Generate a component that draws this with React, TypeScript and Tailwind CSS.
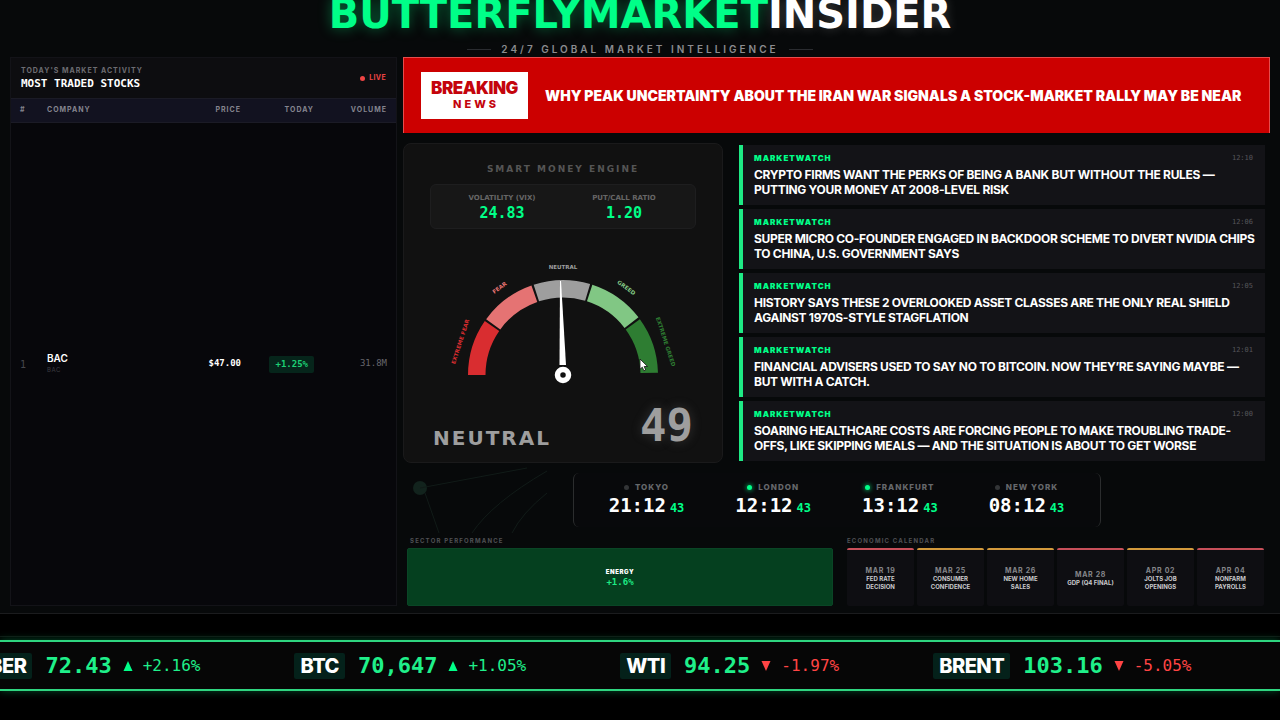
const SANS = "font-['Inter','Liberation_Sans',sans-serif]";
const MONO = "font-['DejaVu_Sans_Mono','Liberation_Mono',monospace]";
const WIDE = "font-['DejaVu_Sans','Liberation_Sans',sans-serif]";

const news = [
  { time: "12:10", title: "CRYPTO FIRMS WANT THE PERKS OF BEING A BANK BUT WITHOUT THE RULES — PUTTING YOUR MONEY AT 2008-LEVEL RISK" },
  { time: "12:06", title: "SUPER MICRO CO-FOUNDER ENGAGED IN BACKDOOR SCHEME TO DIVERT NVIDIA CHIPS TO CHINA, U.S. GOVERNMENT SAYS" },
  { time: "12:05", title: "HISTORY SAYS THESE 2 OVERLOOKED ASSET CLASSES ARE THE ONLY REAL SHIELD AGAINST 1970S-STYLE STAGFLATION" },
  { time: "12:01", title: "FINANCIAL ADVISERS USED TO SAY NO TO BITCOIN. NOW THEY’RE SAYING MAYBE — BUT WITH A CATCH." },
  { time: "12:00", title: "SOARING HEALTHCARE COSTS ARE FORCING PEOPLE TO MAKE TROUBLING TRADE-OFFS, LIKE SKIPPING MEALS — AND THE SITUATION IS ABOUT TO GET WORSE" },
];

const clocks = [
  { city: "TOKYO", time: "21:12", open: false },
  { city: "LONDON", time: "12:12", open: true },
  { city: "FRANKFURT", time: "13:12", open: true },
  { city: "NEW YORK", time: "08:12", open: false },
];

const events = [
  { date: "MAR 19", name: "FED RATE DECISION", high: true },
  { date: "MAR 25", name: "CONSUMER CONFIDENCE", high: false },
  { date: "MAR 26", name: "NEW HOME SALES", high: false },
  { date: "MAR 28", name: "GDP (Q4 FINAL)", high: true },
  { date: "APR 02", name: "JOLTS JOB OPENINGS", high: false },
  { date: "APR 04", name: "NONFARM PAYROLLS", high: true },
];

const quotes = [
  { symbol: "LUMBER", price: "72.43", change: "+2.16%", up: true },
  { symbol: "BTC", price: "70,647", change: "+1.05%", up: true },
  { symbol: "WTI", price: "94.25", change: "-1.97%", up: false },
  { symbol: "BRENT", price: "103.16", change: "-5.05%", up: false },
];

const segments = [
  { start: 180, color: "#d92d30" },
  { start: 144, color: "#e57373" },
  { start: 108, color: "#9e9e9e" },
  { start: 72, color: "#81c784" },
  { start: 36, color: "#2e7d32" },
];

const gaugeLabels = [
  { text: "EXTREME FEAR", angle: -72, color: "#d92d30" },
  { text: "FEAR", angle: -36, color: "#e57373" },
  { text: "NEUTRAL", angle: 0, color: "#9e9e9e" },
  { text: "GREED", angle: 36, color: "#81c784" },
  { text: "EXTREME GREED", angle: 72, color: "#2e7d32" },
];

function arc(start: number, end: number, outer: number, inner: number) {
  const point = (deg: number, r: number) => {
    const a = (deg * Math.PI) / 180;
    return `${(r * Math.cos(a)).toFixed(2)} ${(-r * Math.sin(a)).toFixed(2)}`;
  };
  return `M${point(start, outer)}A${outer} ${outer} 0 0 1 ${point(end, outer)}L${point(end, inner)}A${inner} ${inner} 0 0 0 ${point(start, inner)}Z`;
}

function Header() {
  return (
    <header className="flex flex-col items-center">
      <h1 className={`${WIDE} text-[40px] leading-7 font-bold whitespace-nowrap text-white [text-shadow:0_0_12px_rgba(255,255,255,0.2)]`}>
        <span className="text-[#00ff88] [text-shadow:0_0_14px_rgba(0,255,136,0.4)]">BUTTERFLYMARKET</span>INSIDER
      </h1>
      <div className="mt-3.5 flex items-center gap-2.5">
        <span className="h-px w-6 bg-[#2a2c30]" />
        <p className="text-[10px] leading-[15px] font-semibold tracking-[3px] text-[#8b8c8f]">24/7 GLOBAL MARKET INTELLIGENCE</p>
        <span className="h-px w-6 bg-[#2a2c30]" />
      </div>
    </header>
  );
}

function StocksPanel() {
  return (
    <section className="flex flex-col border border-[#131318] bg-[#07070b]">
      <div className="flex h-10 items-center justify-between bg-[#0d0d10] px-2.5">
        <div>
          <p className="text-[7px] leading-3 font-bold tracking-[1px] text-[#6d6d73]">TODAY'S MARKET ACTIVITY</p>
          <h2 className={`${MONO} text-[11px] leading-3.5 font-bold text-white`}>MOST TRADED STOCKS</h2>
        </div>
        <p className="flex items-center gap-1 text-[7px] font-bold tracking-[0.05em] text-[#ef4444]">
          <span className="size-[5px] rounded-full bg-[#ef4444]" />
          LIVE
        </p>
      </div>
      <table className="w-full grow table-fixed">
        <thead>
          <tr className="h-6 border-y border-[#1b1b26] bg-[#121220] text-[7px] font-bold tracking-[1px] text-[#85858f]">
            <th className="w-9 pl-[9px] text-left">#</th>
            <th className="text-left">COMPANY</th>
            <th className="w-20 text-right">PRICE</th>
            <th className="w-[73px] text-right">TODAY</th>
            <th className="w-[82px] pr-[9px] text-right">VOLUME</th>
          </tr>
        </thead>
        <tbody>
          <tr className={`${MONO} text-[9px]`}>
            <td className="pl-[9px] text-[10px] text-[#46464b]">1</td>
            <td className={SANS}>
              <p className="text-[10px] leading-3 font-semibold text-white">BAC</p>
              <p className="text-[6px] leading-3 tracking-[0.1em] text-[#3c3c42]">BAC</p>
            </td>
            <td className="text-right font-bold text-white">$47.00</td>
            <td className="text-right">
              <span className="inline-block rounded-xs bg-[#06251b] px-1.5 py-0.5 leading-[13px] font-bold text-[#1ccf74]">+1.25%</span>
            </td>
            <td className="pr-[9px] text-right text-[#66666c]">31.8M</td>
          </tr>
        </tbody>
      </table>
    </section>
  );
}

function Breaking() {
  return (
    <section className="flex h-[76px] items-center gap-[17px] border border-b-0 border-[#e64d4d] bg-[#cc0000] px-[17px]">
      <div className="flex h-[47px] w-[107px] shrink-0 flex-col items-center justify-center bg-white text-[#c4040c]">
        <span className="text-[17px] leading-4 font-black tracking-tight">BREAKING</span>
        <span className="mr-[-3px] text-[11px] leading-4 font-extrabold tracking-[3px]">NEWS</span>
      </div>
      <h2 className="text-sm font-black whitespace-nowrap text-white">
        WHY PEAK UNCERTAINTY ABOUT THE IRAN WAR SIGNALS A STOCK-MARKET RALLY MAY BE NEAR
      </h2>
    </section>
  );
}

function Gauge() {
  return (
    <svg viewBox="-240 -240 480 280" className="mx-auto w-60" role="img" aria-label="Sentiment gauge at 49">
      {segments.map((s) => (
        <path key={s.start} d={arc(s.start, s.start - 34.6, 190, 155)} fill={s.color} />
      ))}
      {gaugeLabels.map((l) => (
        <text
          key={l.text}
          transform={`rotate(${l.angle}) translate(0 -212)`}
          textAnchor="middle"
          fontSize="11"
          fontWeight="700"
          fill={l.color}
        >
          {l.text}
        </text>
      ))}
      <path d="M-7 -20L-6 -188L-4 -188L6 -20Z" fill="#fff" />
      <circle r="11" fill="#111" stroke="#fff" strokeWidth="11" />
    </svg>
  );
}

function SmartMoney() {
  return (
    <section className={`${WIDE} flex flex-col rounded-lg border border-[#1a1a1b] bg-[#111111] px-[26px] pt-[19px] pb-1.5`}>
      <h2 className="text-center text-[9px] leading-3 font-bold tracking-[2px] text-[#555]">SMART MONEY ENGINE</h2>
      <dl className="mt-[9px] grid h-[45px] grid-cols-2 content-center rounded-md border border-[#1e1e1f] bg-[#171717] px-2.5 text-center">
        {[
          ["VOLATILITY (VIX)", "24.83"],
          ["PUT/CALL RATIO", "1.20"],
        ].map(([label, value]) => (
          <div key={label}>
            <dt className="text-[7px] leading-3 font-bold text-[#666]">{label}</dt>
            <dd className={`${MONO} text-[15px] leading-[18px] font-bold text-[#00ff88]`}>{value}</dd>
          </div>
        ))}
      </dl>
      <div className="mt-[26px]">
        <Gauge />
      </div>
      <div className="mt-auto flex items-end justify-between px-[3px] text-[#9e9e9e]">
        <p className="pb-1.5 text-xl leading-6 font-bold tracking-[2px]">NEUTRAL</p>
        <p className={`${MONO} text-[44px] leading-[60px] font-bold [text-shadow:0_0_12px_rgba(158,158,158,0.25)]`}>49</p>
      </div>
    </section>
  );
}

function NewsList() {
  return (
    <ul className="flex flex-col gap-1 pt-0.5">
      {news.map((item) => (
        <li key={item.time} className="h-15 border-l-4 border-[#1eea85] bg-[#131317] py-[7px] pr-2 pl-[11px]">
          <div className="flex items-center justify-between pr-1 leading-3">
            <span className="text-[8px] font-black tracking-[1px] text-[#00ff88]">MARKETWATCH</span>
            <time className={`${MONO} text-[7px] text-[#55555a]`}>{item.time}</time>
          </div>
          <h3 className="mt-[3px] text-xs leading-[15px] font-bold tracking-tight text-white">{item.title}</h3>
        </li>
      ))}
    </ul>
  );
}

function Clocks() {
  return (
    <section className="mx-auto flex h-[54px] w-[528px] justify-center gap-[51px] rounded-md border-x border-[#2b2d2e] bg-[#08090b]">
      {clocks.map((c) => (
        <div key={c.city} className="flex flex-col items-center pt-2">
          <p className="flex items-center gap-1.5 text-[8px] leading-3 font-extrabold tracking-[1px] text-[#66686b]">
            {c.open ? (
              <span className="size-[5px] rounded-full bg-[#00ff88] shadow-[0_0_5px_#00ff88]" />
            ) : (
              <span className="size-[5px] rounded-full bg-[#333537]" />
            )}
            {c.city}
          </p>
          <p className={`${MONO} flex items-baseline gap-1 leading-6 font-bold`}>
            <span className="text-[19px] text-white">{c.time}</span>
            <span className="text-xs text-[#00ff88]">43</span>
          </p>
        </div>
      ))}
    </section>
  );
}

function SectorsAndCalendar() {
  return (
    <div className="grid grow grid-cols-[minmax(0,426fr)_minmax(0,417fr)] gap-3.5 pr-1.5 pl-1">
      <section className="flex flex-col">
        <h2 className="pl-[3px] text-[6px] leading-3 font-bold tracking-[0.2em] text-[#505155]">SECTOR PERFORMANCE</h2>
        <div className="mt-px flex grow flex-col items-center justify-center rounded-xs border border-[#0a4626] bg-[#05401f]">
          <p className="text-[6px] leading-[10px] font-black tracking-[0.1em] text-white">ENERGY</p>
          <p className={`${MONO} text-[9px] leading-[10px] font-bold text-[#1eea85]`}>+1.6%</p>
        </div>
      </section>
      <section className="flex flex-col">
        <h2 className="text-[6px] leading-3 font-bold tracking-[0.2em] text-[#505155]">ECONOMIC CALENDAR</h2>
        <ul className="mt-px grid grow grid-cols-6 gap-[3px]">
          {events.map((e) => (
            <li
              key={e.date}
              className={`flex flex-col items-center justify-center rounded-xs border-t-2 bg-[#0e0e12] px-2 text-center ${e.high ? "border-[#c8505a]" : "border-[#d39a3c]"}`}
            >
              <p className="text-[7px] leading-[9px] font-bold tracking-[0.1em] text-[#85868a]">{e.date}</p>
              <p className="text-[6px] leading-2 font-bold text-[#c9c9cc]">{e.name}</p>
            </li>
          ))}
        </ul>
      </section>
    </div>
  );
}

function Ticker() {
  return (
    <footer className="border-t border-[#1b1c1e] bg-black pt-[22px] pb-[29px]">
      <div className="border-t border-[#101412] pt-[3px]">
        <div className="flex h-[51px] items-center gap-[94px] overflow-hidden border-y-2 border-[#2fd680] bg-[#060606] shadow-[0_0_8px_rgba(0,255,136,0.3)]">
          {quotes.map((q) => (
            <div key={q.symbol} className="flex shrink-0 items-center whitespace-nowrap first:-ml-[60px]">
              <span className="rounded-xs bg-[#04211a] px-1.5 text-xl leading-[26px] font-extrabold tracking-tight text-white">{q.symbol}</span>
              <span className={`${MONO} ml-[13px] text-[22px] leading-[26px] font-bold text-[#1ff08a]`}>{q.price}</span>
              <svg viewBox="0 0 10 10" className={q.up ? "ml-[11px] size-2.5 text-[#00ff88]" : "ml-[11px] size-2.5 text-[#ff4444]"} aria-hidden="true">
                <path d={q.up ? "M5 0L9.5 10H.5Z" : "M5 10L9.5 0H.5Z"} fill="currentColor" />
              </svg>
              <span className={`${MONO} ml-2.5 text-base ${q.up ? "text-[#1ff08a]" : "text-[#ff4444]"}`}>{q.change}</span>
            </div>
          ))}
        </div>
      </div>
    </footer>
  );
}

function Backdrop() {
  return (
    <svg className="pointer-events-none absolute top-[463px] left-[397px] h-[75px] w-[240px]" viewBox="0 0 240 75" fill="none" aria-hidden="true">
      <circle cx="23" cy="25" r="7" fill="#12231d" />
      <path d="M23 25L130 5M28 30L42 70M75 70Q95 40 150 8M115 70Q125 50 150 30" stroke="#111b18" />
    </svg>
  );
}

function Cursor() {
  return (
    <svg className="pointer-events-none absolute top-[358px] left-[639px] h-[14px] w-[10px]" viewBox="0 0 10 14" aria-hidden="true">
      <path d="M1 1V11.2L3.3 9.2L4.9 12.8L6.7 12L5.2 8.5H8.6Z" fill="#fff" stroke="#111" strokeWidth=".8" />
    </svg>
  );
}

export default function App() {
  return (
    <div className={`${SANS} relative flex min-h-screen flex-col overflow-hidden bg-[#07090a]`}>
      <Backdrop />
      <Header />
      <main className="relative grid grow grid-cols-[minmax(0,387fr)_minmax(0,867fr)] gap-1.5 px-2.5 pb-[7px]">
        <StocksPanel />
        <div className="flex flex-col">
          <Breaking />
          <div className="mt-2.5 grid h-80 grid-cols-[minmax(0,320fr)_minmax(0,526fr)] gap-4 pr-[5px]">
            <SmartMoney />
            <NewsList />
          </div>
          <div className="mt-2.5 mb-2">
            <Clocks />
          </div>
          <SectorsAndCalendar />
        </div>
      </main>
      <Ticker />
      <Cursor />
    </div>
  );
}
